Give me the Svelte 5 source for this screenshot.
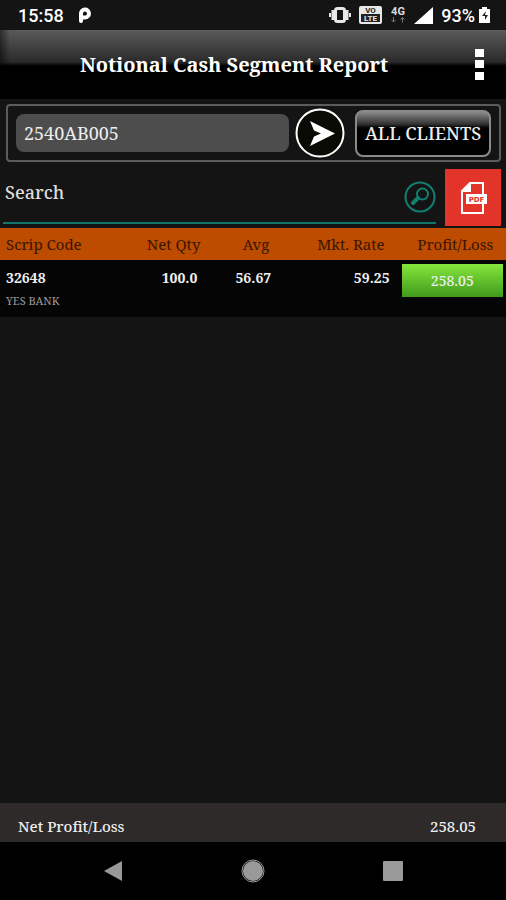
<script lang="ts">
	type Holding = {
		code: string;
		name: string;
		qty: string;
		avg: string;
		rate: string;
		pl: string;
	};

	const holdings: Holding[] = [
		{ code: '32648', name: 'YES BANK', qty: '100.0', avg: '56.67', rate: '59.25', pl: '258.05' }
	];

	let client = $state('2540AB005');
	let search = $state('');
</script>

<div class="screen">
	<div class="status">
		<span class="time">15:58</span>
		<svg class="app-mark" width="14" height="16" viewBox="0 0 14 16" aria-hidden="true">
			<path d="M3 14V7a4 4 0 1 1 4 3.500H5" fill="none" stroke="#fff" stroke-width="4" stroke-linecap="round" />
		</svg>
		<div class="status-icons">
			<svg width="22" height="18" viewBox="0 0 22 18" aria-hidden="true">
				<rect x="6.500" y="2.500" width="9" height="13" rx="2" fill="none" stroke="#e8e8e8" stroke-width="3" />
				<path d="M4 4v10M18 4v10" stroke="#e8e8e8" stroke-width="3" />
				<path d="M1 7v4M21 7v4" stroke="#e8e8e8" stroke-width="2" />
			</svg>
			<svg width="23" height="18" viewBox="0 0 23 18" aria-hidden="true">
				<rect width="23" height="18" rx="2" fill="#e8e8e8" />
				<rect x="2" y="8" width="19" height="8" fill="#222" />
				<text x="11.500" y="7" class="tiny dark" text-anchor="middle">VO</text>
				<text x="11.500" y="15" class="tiny" text-anchor="middle">LTE</text>
			</svg>
			<svg width="16" height="22" viewBox="0 -2 16 22" aria-hidden="true">
				<text x="8" y="9" class="net" text-anchor="middle">4G</text>
				<path d="M3.500 11v5M1.500 14l2 2 2-2M12.500 16.500v-5M10.500 13.500l2-2 2 2" fill="none" stroke="#777" />
			</svg>
			<svg width="19" height="17" viewBox="0 0 19 17" aria-hidden="true">
				<path d="M19 0v17H0z" fill="#fff" />
			</svg>
			<span class="percent">93%</span>
			<svg width="11" height="16" viewBox="0 0 11 16" aria-hidden="true">
				<path d="M3 0h5v2h3v14H0V2h3z" fill="#fff" />
				<path d="M7 4L3 9h3v4l3-5H6z" fill="#222" />
			</svg>
		</div>
	</div>

	<header>
		<h1>Notional Cash Segment Report</h1>
		<button class="more" aria-label="More options">
			<svg width="9" height="31" viewBox="0 0 9 31" aria-hidden="true">
				<path d="M0 0h9v8H0zM0 11h9v8H0zM0 23h9v8H0z" fill="#fff" />
			</svg>
		</button>
	</header>

	<main>
		<form class="client" onsubmit={(e) => e.preventDefault()}>
			<input aria-label="Client code" bind:value={client} />
			<button class="send" aria-label="Submit">
				<svg width="50" height="50" viewBox="0 0 50 50" aria-hidden="true">
					<circle cx="25" cy="25" r="23.500" fill="#0b0b06" stroke="#fff" stroke-width="2" />
					<path d="M15 13L40 25.500 15 38l4-9.500 7-3-7-3z" fill="#fff" />
				</svg>
			</button>
			<button type="button" class="all">ALL CLIENTS</button>
		</form>

		<div class="search">
			<label>
				<input type="text" placeholder="Search" aria-label="Search" bind:value={search} />
				<svg width="32" height="32" viewBox="0 0 32 32" fill="none" stroke="#12806f" aria-hidden="true">
					<circle cx="16" cy="16" r="14.500" stroke-width="2" />
					<circle cx="18.500" cy="13" r="5.500" stroke-width="2" />
					<path d="M14 17l-5 5" stroke-width="4" stroke-linecap="round" />
				</svg>
			</label>
			<button class="pdf" aria-label="Export PDF">
				<svg width="27" height="34" viewBox="0 0 27 34" aria-hidden="true">
					<path d="M23 13V2H10L2 10v22h21v-9" fill="none" stroke="#fff" stroke-width="2" />
					<path d="M11 2v9H2z" fill="#fff" />
					<rect x="6" y="13" width="21" height="10" fill="#fff" />
					<text x="16.500" y="20.500" class="pdf-text" text-anchor="middle">PDF</text>
				</svg>
			</button>
		</div>

		<table>
			<thead>
				<tr>
					<th class="code">Scrip Code</th>
					<th class="qty">Net Qty</th>
					<th class="avg">Avg</th>
					<th class="rate">Mkt. Rate</th>
					<th class="pl">Profit/Loss</th>
				</tr>
			</thead>
			<tbody>
				{#each holdings as row (row.code)}
					<tr>
						<td class="code">{row.code}<small>{row.name}</small></td>
						<td class="qty">{row.qty}</td>
						<td class="avg">{row.avg}</td>
						<td class="rate">{row.rate}</td>
						<td class="pl"><span class="gain">{row.pl}</span></td>
					</tr>
				{/each}
			</tbody>
		</table>
	</main>

	<footer>
		<span>Net Profit/Loss</span>
		<span>258.05</span>
	</footer>

	<nav>
		<button aria-label="Back">
			<svg width="24" height="24" viewBox="0 0 24 24" aria-hidden="true">
				<path d="M21 2v20L3 12z" fill="#999" />
			</svg>
		</button>
		<button aria-label="Home">
			<svg width="24" height="24" viewBox="0 0 24 24" aria-hidden="true">
				<circle cx="12" cy="12" r="11" fill="none" stroke="#999" />
				<circle cx="12" cy="12" r="10" fill="#999" />
			</svg>
		</button>
		<button aria-label="Recent apps">
			<svg width="24" height="24" viewBox="0 0 24 24" aria-hidden="true">
				<rect x="2" y="2" width="20" height="20" rx="1" fill="#999" />
			</svg>
		</button>
	</nav>
</div>

<style>
	:global(body) {
		margin: 0;
		background: #141414;
	}

	.screen {
		display: flex;
		flex-direction: column;
		min-height: 100vh;
		background: #141414;
		color: #eee;
		font-family: 'Noto Serif', 'DejaVu Serif Condensed', 'DejaVu Serif', serif;
		font-size: 14px;
	}

	button,
	input {
		box-sizing: border-box;
		border: 0;
		padding: 0;
		margin: 0;
		background: none;
		color: inherit;
		font: inherit;
	}

	svg {
		display: block;
		flex: none;
	}

	.status {
		display: flex;
		align-items: center;
		height: 30px;
		padding: 0 16px 0 18px;
		box-sizing: border-box;
		font-family: Roboto, sans-serif;
		font-size: 18px;
		font-weight: 500;
		color: #fff;
	}

	.app-mark {
		margin-left: 14px;
	}

	.status-icons {
		display: flex;
		align-items: center;
		gap: 8px;
		margin-left: auto;
	}

	.percent {
		margin-right: -4px;
	}

	.tiny {
		font: 700 8px Roboto, sans-serif;
		fill: #e8e8e8;
	}

	.dark {
		fill: #222;
	}

	.net {
		font: 700 11px Roboto, sans-serif;
		fill: #ddd;
	}

	header {
		display: flex;
		align-items: center;
		height: 69px;
		padding: 0 22px 0 80px;
		box-sizing: border-box;
		background:
			linear-gradient(90deg, rgb(0 0 0 / 50%), transparent 10px),
			linear-gradient(#5a5a5a, #2a2a2a 32px, #000 36px);
	}

	h1 {
		flex: 1;
		margin: 0;
		font-size: 20px;
		font-weight: 700;
		white-space: nowrap;
		color: #fff;
	}

	main {
		flex: 1;
	}

	.client {
		display: flex;
		align-items: center;
		gap: 6px;
		margin: 5px 5px 0 6px;
		padding: 2px 8px;
		border: 2px solid #5c5c5c;
		border-radius: 4px;
	}

	.client input {
		flex: 1;
		min-width: 0;
		height: 38px;
		padding: 0 8px;
		border-radius: 8px;
		background: #4d4d4d;
		font-size: 18px;
	}

	.all {
		width: 136px;
		height: 47px;
		margin-left: 4px;
		border: 2px solid #8a8a8a;
		border-radius: 8px;
		background: linear-gradient(#8a8a8a, #333 12px, #000 16px);
		font-size: 18px;
		font-weight: 500;
		white-space: nowrap;
	}

	.search {
		display: flex;
		gap: 9px;
		padding: 7px 5px 2px 3px;
	}

	.search label {
		display: flex;
		flex: 1;
		align-items: center;
		border-bottom: 2px solid #12756a;
		margin-bottom: 2px;
		padding-top: 2px;
	}

	.search input {
		flex: 1;
		min-width: 0;
		height: 36px;
		padding: 0 2px 10px;
		font-size: 18px;
		font-weight: 500;
	}

	.search input::placeholder {
		color: #ddd;
		opacity: 1;
	}

	.pdf {
		display: grid;
		place-items: center;
		width: 56px;
		height: 57px;
		background: #e23428;
	}

	.pdf-text {
		font: 700 7px 'DejaVu Sans', sans-serif;
		fill: #e23428;
	}

	table {
		width: 100%;
		table-layout: fixed;
		border-collapse: collapse;
	}

	th,
	td {
		box-sizing: border-box;
		text-align: right;
	}

	th {
		height: 32px;
		padding: 0;
		background: #bd4b00;
		color: #3a1600;
		font-weight: 400;
		font-size: 15px;
		white-space: nowrap;
	}

	td {
		height: 57px;
		padding: 4px 0;
		background: #050505;
		font-weight: 700;
		line-height: 28px;
		vertical-align: top;
	}

	.code {
		width: 25%;
		padding-left: 6px;
		text-align: left;
	}

	.qty {
		width: 15%;
	}

	th.qty {
		padding-right: 2px;
	}

	td.qty {
		padding-right: 5px;
	}

	.avg {
		width: 14%;
	}

	th.avg {
		padding-right: 4px;
	}

	td.avg {
		padding-right: 2px;
	}

	.rate {
		width: 23%;
	}

	th.rate {
		padding-right: 5px;
	}

	.pl {
		padding-left: 12px;
		padding-right: 3px;
		text-align: center;
	}

	th.pl {
		padding-left: 15px;
		padding-right: 0;
	}

	td small {
		display: block;
		font-size: 11px;
		font-weight: 400;
		line-height: 18px;
		color: #999;
	}

	.gain {
		display: block;
		line-height: 33px;
		font-weight: 500;
		background: linear-gradient(#86e63c, #3f9a1c);
	}

	footer {
		display: flex;
		justify-content: space-between;
		align-items: center;
		height: 39px;
		padding: 6px 30px 0 18px;
		box-sizing: border-box;
		background: #2d2a29;
		font-size: 15px;
		font-weight: 500;
	}

	nav {
		display: flex;
		justify-content: space-between;
		align-items: center;
		height: 58px;
		padding: 0 20%;
		box-sizing: border-box;
		background: #000;
	}
</style>
